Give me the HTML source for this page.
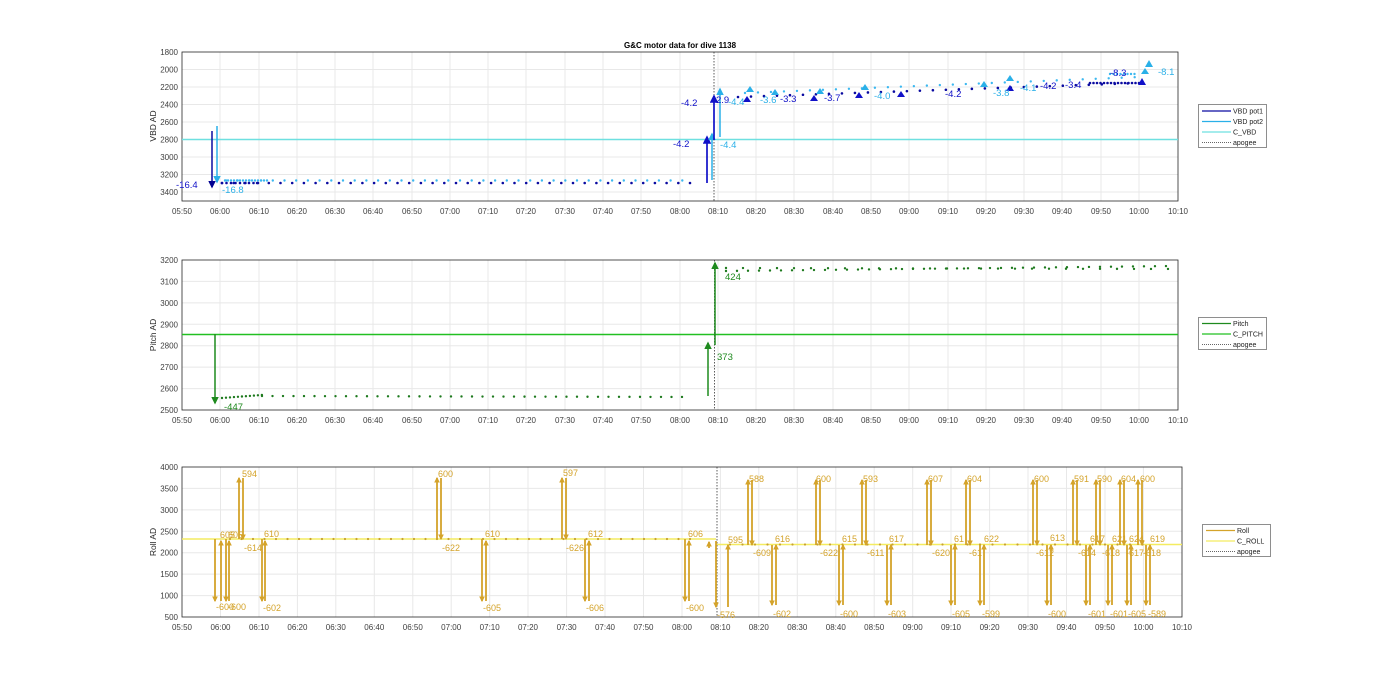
<!DOCTYPE html>
<html><head><meta charset="utf-8"><style>
html,body{margin:0;padding:0;background:#fff;}
svg{display:block;font-family:"Liberation Sans",sans-serif;}
.tk{font-size:8px;fill:#404040;}
.g line{stroke:#e8e8e8;stroke-width:1;}
</style></head><body>
<svg width="1400" height="693" viewBox="0 0 1400 693">
<defs>
<marker id="mb" viewBox="0 0 10 10" refX="8" refY="5" markerWidth="5" markerHeight="5" orient="auto"><path d="M0,0L10,5L0,10z" fill="#1010c8"/></marker>
<marker id="mn" viewBox="0 0 10 10" refX="8" refY="5" markerWidth="5" markerHeight="5" orient="auto"><path d="M0,0L10,5L0,10z" fill="#000090"/></marker>
<marker id="ml" viewBox="0 0 10 10" refX="8" refY="5" markerWidth="5" markerHeight="5" orient="auto"><path d="M0,0L10,5L0,10z" fill="#2ab0e8"/></marker>
<marker id="mg" viewBox="0 0 10 10" refX="8" refY="5" markerWidth="5" markerHeight="5" orient="auto"><path d="M0,0L10,5L0,10z" fill="#1e8a1e"/></marker>
<marker id="my" viewBox="0 0 10 10" refX="8" refY="5" markerWidth="3.2" markerHeight="3.2" orient="auto"><path d="M0,0L10,5L0,10z" fill="#d4a32a"/></marker>
</defs>
<text x="680" y="48" text-anchor="middle" font-size="8" font-weight="bold" fill="#000">G&amp;C motor data for dive 1138</text>

<!-- ============ PLOT 1 ============ -->
<g class="g">
<line x1="220" y1="52" x2="220" y2="201"/><line x1="259" y1="52" x2="259" y2="201"/><line x1="297" y1="52" x2="297" y2="201"/><line x1="335" y1="52" x2="335" y2="201"/><line x1="373" y1="52" x2="373" y2="201"/><line x1="412" y1="52" x2="412" y2="201"/><line x1="450" y1="52" x2="450" y2="201"/><line x1="488" y1="52" x2="488" y2="201"/><line x1="526" y1="52" x2="526" y2="201"/><line x1="565" y1="52" x2="565" y2="201"/><line x1="603" y1="52" x2="603" y2="201"/><line x1="641" y1="52" x2="641" y2="201"/><line x1="680" y1="52" x2="680" y2="201"/><line x1="718" y1="52" x2="718" y2="201"/><line x1="756" y1="52" x2="756" y2="201"/><line x1="794" y1="52" x2="794" y2="201"/><line x1="833" y1="52" x2="833" y2="201"/><line x1="871" y1="52" x2="871" y2="201"/><line x1="909" y1="52" x2="909" y2="201"/><line x1="948" y1="52" x2="948" y2="201"/><line x1="986" y1="52" x2="986" y2="201"/><line x1="1024" y1="52" x2="1024" y2="201"/><line x1="1062" y1="52" x2="1062" y2="201"/><line x1="1101" y1="52" x2="1101" y2="201"/><line x1="1139" y1="52" x2="1139" y2="201"/>
<line x1="182" y1="69.5" x2="1178" y2="69.5"/><line x1="182" y1="87" x2="1178" y2="87"/><line x1="182" y1="104.5" x2="1178" y2="104.5"/><line x1="182" y1="122" x2="1178" y2="122"/><line x1="182" y1="139.5" x2="1178" y2="139.5"/><line x1="182" y1="157" x2="1178" y2="157"/><line x1="182" y1="174.5" x2="1178" y2="174.5"/><line x1="182" y1="192" x2="1178" y2="192"/>
</g>
<rect x="182" y="52" width="996" height="149" fill="none" stroke="#262626" stroke-width="0.8"/>
<g class="tk" text-anchor="end">
<text x="178" y="55">1800</text><text x="178" y="72.5">2000</text><text x="178" y="90">2200</text><text x="178" y="107.5">2400</text><text x="178" y="125">2600</text><text x="178" y="142.5">2800</text><text x="178" y="160">3000</text><text x="178" y="177.5">3200</text><text x="178" y="195">3400</text>
</g>
<text transform="translate(156,126) rotate(-90)" text-anchor="middle" font-size="8.5" fill="#262626">VBD AD</text>
<g class="tk" text-anchor="middle">
<text x="182" y="214">05:50</text><text x="220" y="214">06:00</text><text x="259" y="214">06:10</text><text x="297" y="214">06:20</text><text x="335" y="214">06:30</text><text x="373" y="214">06:40</text><text x="412" y="214">06:50</text><text x="450" y="214">07:00</text><text x="488" y="214">07:10</text><text x="526" y="214">07:20</text><text x="565" y="214">07:30</text><text x="603" y="214">07:40</text><text x="641" y="214">07:50</text><text x="680" y="214">08:00</text><text x="718" y="214">08:10</text><text x="756" y="214">08:20</text><text x="794" y="214">08:30</text><text x="833" y="214">08:40</text><text x="871" y="214">08:50</text><text x="909" y="214">09:00</text><text x="948" y="214">09:10</text><text x="986" y="214">09:20</text><text x="1024" y="214">09:30</text><text x="1062" y="214">09:40</text><text x="1101" y="214">09:50</text><text x="1139" y="214">10:00</text><text x="1178" y="214">10:10</text>
</g>
<line x1="182" y1="139.5" x2="1178" y2="139.5" stroke="#6ee0e0" stroke-width="1.5"/>
<line x1="714" y1="52" x2="714" y2="201" stroke="#333" stroke-width="0.8" stroke-dasharray="1.5 1.5"/>
<line x1="222" y1="183" x2="692" y2="183" stroke="#0a0aa0" stroke-width="2.6" stroke-linecap="round" stroke-dasharray="0 11.7"/>
<line x1="226" y1="180.5" x2="692" y2="180.5" stroke="#3cb8f0" stroke-width="2.4" stroke-linecap="round" stroke-dasharray="0 11.7"/>
<line x1="225" y1="180.5" x2="270" y2="180.5" stroke="#3cb8f0" stroke-width="2.4" stroke-linecap="round" stroke-dasharray="0 3"/>
<line x1="222" y1="183" x2="262" y2="183" stroke="#0a0aa0" stroke-width="2.6" stroke-linecap="round" stroke-dasharray="0 4.5"/>
<line x1="738" y1="97" x2="1140" y2="83" stroke="#0a0aa0" stroke-width="2.6" stroke-linecap="round" stroke-dasharray="0 13"/>
<line x1="745" y1="93" x2="1140" y2="77" stroke="#3cb8f0" stroke-width="2.4" stroke-linecap="round" stroke-dasharray="0 13"/>
<line x1="1090" y1="83" x2="1140" y2="83" stroke="#0a0aa0" stroke-width="2.6" stroke-linecap="round" stroke-dasharray="0 3.5"/>
<line x1="1110" y1="74" x2="1135" y2="74" stroke="#3cb8f0" stroke-width="2.4" stroke-linecap="round" stroke-dasharray="0 3.5"/>
<line x1="212" y1="131" x2="212" y2="187" stroke="#0a0aa0" stroke-width="1.5" marker-end="url(#mn)"/>
<line x1="217" y1="126" x2="217" y2="182" stroke="#2ab0e8" stroke-width="1.5" marker-end="url(#ml)"/>
<line x1="707" y1="183" x2="707" y2="137" stroke="#1010c8" stroke-width="1.7" marker-end="url(#mb)"/>
<line x1="712" y1="180" x2="712" y2="134" stroke="#2ab0e8" stroke-width="1.5" marker-end="url(#ml)"/>
<line x1="714" y1="140" x2="714" y2="96" stroke="#1010c8" stroke-width="1.7" marker-end="url(#mb)"/>
<line x1="720" y1="137" x2="720" y2="89" stroke="#2ab0e8" stroke-width="1.5" marker-end="url(#ml)"/>
<g fill="#1010c8"><path d="M743,102l4,-6l4,6z"/><path d="M810,101l4,-6l4,6z"/><path d="M855,98l4,-6l4,6z"/><path d="M897,97l4,-6l4,6z"/><path d="M1006,91l4,-6l4,6z"/><path d="M1138,85l4,-7l4,7z"/></g>
<g fill="#2ab0e8"><path d="M746,92l4,-6l4,6z"/><path d="M771,95l4,-6l4,6z"/><path d="M816,94l4,-6l4,6z"/><path d="M861,90l4,-6l4,6z"/><path d="M980,87l4,-6l4,6z"/><path d="M1006,81l4,-6l4,6z"/><path d="M1141,74l4,-6l4,6z"/><path d="M1145,67l4,-7l4,7z"/></g>
<g font-size="9.5">
<text x="176" y="188" fill="#1010c8">-16.4</text><text x="222" y="193" fill="#2ab0e8">-16.8</text>
<text x="681" y="106" fill="#1010c8">-4.2</text><text x="673" y="147" fill="#1010c8">-4.2</text><text x="720" y="148" fill="#2ab0e8">-4.4</text>
<text x="716" y="103" fill="#1010c8">2.9</text><text x="728" y="105" fill="#2ab0e8">-4.4</text>
<text x="760" y="103" fill="#2ab0e8">-3.6</text><text x="780" y="102" fill="#1010c8">-3.3</text><text x="824" y="101" fill="#1010c8">-3.7</text><text x="874" y="99" fill="#2ab0e8">-4.0</text>
<text x="945" y="97" fill="#1010c8">-4.2</text><text x="993" y="96" fill="#2ab0e8">-3.8</text><text x="1020" y="91" fill="#2ab0e8">-4.1</text><text x="1040" y="89" fill="#1010c8">-4.2</text><text x="1065" y="88" fill="#1010c8">-3.4</text>
<text x="1110" y="76" fill="#1010c8">-8.3</text><text x="1158" y="75" fill="#2ab0e8">-8.1</text>
</g>
<rect x="1198.5" y="104.5" width="68" height="43" fill="#fff" stroke="#444" stroke-width="0.6"/>
<line x1="1202" y1="111" x2="1231" y2="111" stroke="#0a0aa0" stroke-width="1.3"/>
<line x1="1202" y1="121.5" x2="1231" y2="121.5" stroke="#2ab0e8" stroke-width="1.3"/>
<line x1="1202" y1="132" x2="1231" y2="132" stroke="#6ee0e0" stroke-width="1.3"/>
<line x1="1202" y1="142.5" x2="1231" y2="142.5" stroke="#333" stroke-width="0.7" stroke-dasharray="1 1"/>
<g font-size="7" fill="#222"><text x="1233" y="113.5">VBD pot1</text><text x="1233" y="124">VBD pot2</text><text x="1233" y="134.5">C_VBD</text><text x="1233" y="145">apogee</text></g>

<!-- ============ PLOT 2 ============ -->
<g class="g">
<line x1="220" y1="260" x2="220" y2="410"/><line x1="259" y1="260" x2="259" y2="410"/><line x1="297" y1="260" x2="297" y2="410"/><line x1="335" y1="260" x2="335" y2="410"/><line x1="373" y1="260" x2="373" y2="410"/><line x1="412" y1="260" x2="412" y2="410"/><line x1="450" y1="260" x2="450" y2="410"/><line x1="488" y1="260" x2="488" y2="410"/><line x1="526" y1="260" x2="526" y2="410"/><line x1="565" y1="260" x2="565" y2="410"/><line x1="603" y1="260" x2="603" y2="410"/><line x1="641" y1="260" x2="641" y2="410"/><line x1="680" y1="260" x2="680" y2="410"/><line x1="718" y1="260" x2="718" y2="410"/><line x1="756" y1="260" x2="756" y2="410"/><line x1="794" y1="260" x2="794" y2="410"/><line x1="833" y1="260" x2="833" y2="410"/><line x1="871" y1="260" x2="871" y2="410"/><line x1="909" y1="260" x2="909" y2="410"/><line x1="948" y1="260" x2="948" y2="410"/><line x1="986" y1="260" x2="986" y2="410"/><line x1="1024" y1="260" x2="1024" y2="410"/><line x1="1062" y1="260" x2="1062" y2="410"/><line x1="1101" y1="260" x2="1101" y2="410"/><line x1="1139" y1="260" x2="1139" y2="410"/>
<line x1="182" y1="281.4" x2="1178" y2="281.4"/><line x1="182" y1="302.9" x2="1178" y2="302.9"/><line x1="182" y1="324.3" x2="1178" y2="324.3"/><line x1="182" y1="345.7" x2="1178" y2="345.7"/><line x1="182" y1="367.1" x2="1178" y2="367.1"/><line x1="182" y1="388.6" x2="1178" y2="388.6"/>
</g>
<rect x="182" y="260" width="996" height="150" fill="none" stroke="#262626" stroke-width="0.8"/>
<g class="tk" text-anchor="end">
<text x="178" y="263">3200</text><text x="178" y="284.4">3100</text><text x="178" y="305.9">3000</text><text x="178" y="327.3">2900</text><text x="178" y="348.7">2800</text><text x="178" y="370.1">2700</text><text x="178" y="391.6">2600</text><text x="178" y="413">2500</text>
</g>
<text transform="translate(156,335) rotate(-90)" text-anchor="middle" font-size="8.5" fill="#262626">Pitch AD</text>
<g class="tk" text-anchor="middle">
<text x="182" y="423">05:50</text><text x="220" y="423">06:00</text><text x="259" y="423">06:10</text><text x="297" y="423">06:20</text><text x="335" y="423">06:30</text><text x="373" y="423">06:40</text><text x="412" y="423">06:50</text><text x="450" y="423">07:00</text><text x="488" y="423">07:10</text><text x="526" y="423">07:20</text><text x="565" y="423">07:30</text><text x="603" y="423">07:40</text><text x="641" y="423">07:50</text><text x="680" y="423">08:00</text><text x="718" y="423">08:10</text><text x="756" y="423">08:20</text><text x="794" y="423">08:30</text><text x="833" y="423">08:40</text><text x="871" y="423">08:50</text><text x="909" y="423">09:00</text><text x="948" y="423">09:10</text><text x="986" y="423">09:20</text><text x="1024" y="423">09:30</text><text x="1062" y="423">09:40</text><text x="1101" y="423">09:50</text><text x="1139" y="423">10:00</text><text x="1178" y="423">10:10</text>
</g>
<line x1="182" y1="334.5" x2="1178" y2="334.5" stroke="#22c022" stroke-width="1.5"/>
<line x1="714.5" y1="260" x2="714.5" y2="410" stroke="#333" stroke-width="0.8" stroke-dasharray="1.5 1.5"/>
<line x1="222" y1="398" x2="262" y2="395" stroke="#1e7a1e" stroke-width="2.4" stroke-linecap="round" stroke-dasharray="0 4"/>
<line x1="262" y1="396" x2="690" y2="397" stroke="#1e7a1e" stroke-width="2.4" stroke-linecap="round" stroke-dasharray="0 10.5"/>
<line x1="726" y1="271" x2="1175" y2="266" stroke="#1e7a1e" stroke-width="2.4" stroke-linecap="round" stroke-dasharray="0 11"/>
<line x1="726" y1="268" x2="1175" y2="269" stroke="#1e7a1e" stroke-width="2.4" stroke-linecap="round" stroke-dasharray="0 17"/>
<line x1="215" y1="334" x2="215" y2="403" stroke="#1e8a1e" stroke-width="1.5" marker-end="url(#mg)"/>
<line x1="708" y1="396" x2="708" y2="343" stroke="#1e8a1e" stroke-width="1.5" marker-end="url(#mg)"/>
<line x1="715" y1="345" x2="715" y2="263" stroke="#1e8a1e" stroke-width="1.5" marker-end="url(#mg)"/>
<g font-size="9.5" fill="#1e8a1e"><text x="224" y="410">-447</text><text x="717" y="360">373</text><text x="725" y="280">424</text></g>
<rect x="1198.5" y="317.5" width="68" height="32" fill="#fff" stroke="#444" stroke-width="0.6"/>
<line x1="1202" y1="323.5" x2="1231" y2="323.5" stroke="#1e8a1e" stroke-width="1.3"/>
<line x1="1202" y1="334" x2="1231" y2="334" stroke="#22c022" stroke-width="1.3"/>
<line x1="1202" y1="344.5" x2="1231" y2="344.5" stroke="#333" stroke-width="0.7" stroke-dasharray="1 1"/>
<g font-size="7" fill="#222"><text x="1233" y="326">Pitch</text><text x="1233" y="336.5">C_PITCH</text><text x="1233" y="347">apogee</text></g>

<!-- ============ PLOT 3 ============ -->
<g class="g">
<line x1="220.5" y1="467" x2="220.5" y2="617"/><line x1="259" y1="467" x2="259" y2="617"/><line x1="297.4" y1="467" x2="297.4" y2="617"/><line x1="335.8" y1="467" x2="335.8" y2="617"/><line x1="374.3" y1="467" x2="374.3" y2="617"/><line x1="412.8" y1="467" x2="412.8" y2="617"/><line x1="451.2" y1="467" x2="451.2" y2="617"/><line x1="489.7" y1="467" x2="489.7" y2="617"/><line x1="528" y1="467" x2="528" y2="617"/><line x1="566.6" y1="467" x2="566.6" y2="617"/><line x1="605" y1="467" x2="605" y2="617"/><line x1="643.5" y1="467" x2="643.5" y2="617"/><line x1="682" y1="467" x2="682" y2="617"/><line x1="720.4" y1="467" x2="720.4" y2="617"/><line x1="758.8" y1="467" x2="758.8" y2="617"/><line x1="797.3" y1="467" x2="797.3" y2="617"/><line x1="835.8" y1="467" x2="835.8" y2="617"/><line x1="874.2" y1="467" x2="874.2" y2="617"/><line x1="912.7" y1="467" x2="912.7" y2="617"/><line x1="951" y1="467" x2="951" y2="617"/><line x1="989.6" y1="467" x2="989.6" y2="617"/><line x1="1028" y1="467" x2="1028" y2="617"/><line x1="1066.5" y1="467" x2="1066.5" y2="617"/><line x1="1105" y1="467" x2="1105" y2="617"/><line x1="1143.4" y1="467" x2="1143.4" y2="617"/>
<line x1="182" y1="488.4" x2="1182" y2="488.4"/><line x1="182" y1="509.9" x2="1182" y2="509.9"/><line x1="182" y1="531.3" x2="1182" y2="531.3"/><line x1="182" y1="552.7" x2="1182" y2="552.7"/><line x1="182" y1="574.1" x2="1182" y2="574.1"/><line x1="182" y1="595.6" x2="1182" y2="595.6"/>
</g>
<rect x="182" y="467" width="1000" height="150" fill="none" stroke="#262626" stroke-width="0.8"/>
<g class="tk" text-anchor="end">
<text x="178" y="470">4000</text><text x="178" y="491.4">3500</text><text x="178" y="512.9">3000</text><text x="178" y="534.3">2500</text><text x="178" y="555.7">2000</text><text x="178" y="577.1">1500</text><text x="178" y="598.6">1000</text><text x="178" y="620">500</text>
</g>
<text transform="translate(156,542) rotate(-90)" text-anchor="middle" font-size="8.5" fill="#262626">Roll AD</text>
<g class="tk" text-anchor="middle">
<text x="182" y="630">05:50</text><text x="220.5" y="630">06:00</text><text x="259" y="630">06:10</text><text x="297.4" y="630">06:20</text><text x="335.8" y="630">06:30</text><text x="374.3" y="630">06:40</text><text x="412.8" y="630">06:50</text><text x="451.2" y="630">07:00</text><text x="489.7" y="630">07:10</text><text x="528" y="630">07:20</text><text x="566.6" y="630">07:30</text><text x="605" y="630">07:40</text><text x="643.5" y="630">07:50</text><text x="682" y="630">08:00</text><text x="720.4" y="630">08:10</text><text x="758.8" y="630">08:20</text><text x="797.3" y="630">08:30</text><text x="835.8" y="630">08:40</text><text x="874.2" y="630">08:50</text><text x="912.7" y="630">09:00</text><text x="951" y="630">09:10</text><text x="989.6" y="630">09:20</text><text x="1028" y="630">09:30</text><text x="1066.5" y="630">09:40</text><text x="1105" y="630">09:50</text><text x="1143.4" y="630">10:00</text><text x="1182" y="630">10:10</text>
</g>
<line x1="182" y1="539" x2="716" y2="539" stroke="#f4ec60" stroke-width="1.6"/>
<line x1="716" y1="544.5" x2="1182" y2="544.5" stroke="#f4ec60" stroke-width="1.6"/>
<line x1="717" y1="467" x2="717" y2="617" stroke="#333" stroke-width="0.8" stroke-dasharray="1.5 1.5"/>
<line x1="230" y1="539" x2="700" y2="539" stroke="#c8a030" stroke-width="2.2" stroke-linecap="round" stroke-dasharray="0 11.5"/>
<line x1="730" y1="544.5" x2="1150" y2="544.5" stroke="#c8a030" stroke-width="2.2" stroke-linecap="round" stroke-dasharray="0 12.5"/>
<g stroke="#d4a32a" stroke-width="1.8" fill="none">
<path d="M215,539V601" marker-end="url(#my)"/><path d="M226,539V601" marker-end="url(#my)"/><path d="M221,601V541" marker-end="url(#my)"/><path d="M229,601V541" marker-end="url(#my)"/>
<path d="M262,539V601" marker-end="url(#my)"/><path d="M265,601V541" marker-end="url(#my)"/>
<path d="M239,539V478" marker-end="url(#my)"/><path d="M243,478V539" marker-end="url(#my)"/>
<path d="M437,539V478" marker-end="url(#my)"/><path d="M441,478V539" marker-end="url(#my)"/>
<path d="M482,539V601" marker-end="url(#my)"/><path d="M486,601V541" marker-end="url(#my)"/>
<path d="M562,539V478" marker-end="url(#my)"/><path d="M566,478V539" marker-end="url(#my)"/>
<path d="M585,539V601" marker-end="url(#my)"/><path d="M589,601V541" marker-end="url(#my)"/>
<path d="M685,539V601" marker-end="url(#my)"/><path d="M689,601V541" marker-end="url(#my)"/>
<path d="M709,548V542" marker-end="url(#my)"/>
<path d="M716,541V607" marker-end="url(#my)"/><path d="M728,607V545" marker-end="url(#my)"/>
<path d="M748,545V480" marker-end="url(#my)"/><path d="M752,480V545" marker-end="url(#my)"/>
<path d="M772,545V605" marker-end="url(#my)"/><path d="M776,605V545" marker-end="url(#my)"/>
<path d="M816,545V480" marker-end="url(#my)"/><path d="M820,480V545" marker-end="url(#my)"/>
<path d="M839,545V605" marker-end="url(#my)"/><path d="M843,605V545" marker-end="url(#my)"/>
<path d="M862,545V480" marker-end="url(#my)"/><path d="M866,480V545" marker-end="url(#my)"/>
<path d="M887,545V605" marker-end="url(#my)"/><path d="M891,605V545" marker-end="url(#my)"/>
<path d="M927,545V480" marker-end="url(#my)"/><path d="M931,480V545" marker-end="url(#my)"/>
<path d="M951,545V605" marker-end="url(#my)"/><path d="M955,605V545" marker-end="url(#my)"/>
<path d="M966,545V480" marker-end="url(#my)"/><path d="M970,480V545" marker-end="url(#my)"/>
<path d="M980,545V605" marker-end="url(#my)"/><path d="M984,605V545" marker-end="url(#my)"/>
<path d="M1033,545V480" marker-end="url(#my)"/><path d="M1037,480V545" marker-end="url(#my)"/>
<path d="M1047,545V605" marker-end="url(#my)"/><path d="M1051,605V545" marker-end="url(#my)"/>
<path d="M1073,545V480" marker-end="url(#my)"/><path d="M1077,480V545" marker-end="url(#my)"/>
<path d="M1086,545V605" marker-end="url(#my)"/><path d="M1090,605V545" marker-end="url(#my)"/>
<path d="M1096,545V480" marker-end="url(#my)"/><path d="M1100,480V545" marker-end="url(#my)"/>
<path d="M1108,545V605" marker-end="url(#my)"/><path d="M1112,605V545" marker-end="url(#my)"/>
<path d="M1120,545V480" marker-end="url(#my)"/><path d="M1124,480V545" marker-end="url(#my)"/>
<path d="M1127,545V605" marker-end="url(#my)"/><path d="M1131,605V545" marker-end="url(#my)"/>
<path d="M1138,545V480" marker-end="url(#my)"/><path d="M1142,480V545" marker-end="url(#my)"/>
<path d="M1146,545V605" marker-end="url(#my)"/><path d="M1150,605V545" marker-end="url(#my)"/>
</g>
<g font-size="9" fill="#d4a32a">
<text x="220" y="538">605</text><text x="228" y="538">605</text><text x="216" y="610">-600</text><text x="228" y="610">-600</text>
<text x="242" y="477">594</text><text x="244" y="551">-614</text><text x="264" y="537">610</text><text x="263" y="611">-602</text>
<text x="438" y="477">600</text><text x="442" y="551">-622</text><text x="485" y="537">610</text><text x="483" y="611">-605</text>
<text x="563" y="476">597</text><text x="566" y="551">-626</text><text x="588" y="537">612</text><text x="586" y="611">-606</text>
<text x="688" y="537">606</text><text x="686" y="611">-600</text>
<text x="717" y="618">-576</text><text x="728" y="543">595</text>
<text x="749" y="482">588</text><text x="753" y="556">-609</text><text x="775" y="542">616</text><text x="773" y="617">-602</text>
<text x="816" y="482">600</text><text x="820" y="556">-622</text><text x="842" y="542">615</text><text x="840" y="617">-600</text>
<text x="863" y="482">593</text><text x="867" y="556">-611</text><text x="889" y="542">617</text><text x="888" y="617">-603</text>
<text x="928" y="482">607</text><text x="932" y="556">-620</text><text x="954" y="542">61</text><text x="952" y="617">-605</text>
<text x="967" y="482">604</text><text x="969" y="556">-61</text><text x="984" y="542">622</text><text x="982" y="617">-599</text>
<text x="1034" y="482">600</text><text x="1036" y="556">-612</text><text x="1050" y="541">613</text><text x="1048" y="617">-600</text>
<text x="1074" y="482">591</text><text x="1078" y="556">-614</text><text x="1090" y="542">617</text><text x="1088" y="617">-601</text>
<text x="1097" y="482">590</text><text x="1102" y="556">-618</text><text x="1112" y="542">621</text><text x="1110" y="617">-601</text>
<text x="1121" y="482">604</text><text x="1126" y="556">-617</text><text x="1129" y="542">624</text><text x="1128" y="617">-605</text>
<text x="1140" y="482">600</text><text x="1143" y="556">-618</text><text x="1150" y="542">619</text><text x="1148" y="617">-589</text>
</g>
<rect x="1202.5" y="524.5" width="68" height="32" fill="#fff" stroke="#444" stroke-width="0.6"/>
<line x1="1206" y1="530.5" x2="1235" y2="530.5" stroke="#d4a32a" stroke-width="1.3"/>
<line x1="1206" y1="541" x2="1235" y2="541" stroke="#f4ec60" stroke-width="1.3"/>
<line x1="1206" y1="551.5" x2="1235" y2="551.5" stroke="#333" stroke-width="0.7" stroke-dasharray="1 1"/>
<g font-size="7" fill="#222"><text x="1237" y="533">Roll</text><text x="1237" y="543.5">C_ROLL</text><text x="1237" y="554">apogee</text></g>
</svg>
</body></html>
